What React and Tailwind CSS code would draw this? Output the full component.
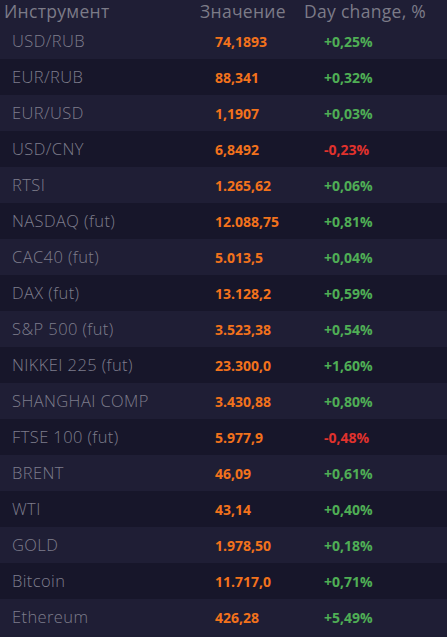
import React from "react";

const rows = [
  ["USD/RUB", "74,1893", "+0,25%"],
  ["EUR/RUB", "88,341", "+0,32%"],
  ["EUR/USD", "1,1907", "+0,03%"],
  ["USD/CNY", "6,8492", "-0,23%"],
  ["RTSI", "1.265,62", "+0,06%"],
  ["NASDAQ (fut)", "12.088,75", "+0,81%"],
  ["CAC40 (fut)", "5.013,5", "+0,04%"],
  ["DAX (fut)", "13.128,2", "+0,59%"],
  ["S&P 500 (fut)", "3.523,38", "+0,54%"],
  ["NIKKEI 225 (fut)", "23.300,0", "+1,60%"],
  ["SHANGHAI COMP", "3.430,88", "+0,80%"],
  ["FTSE 100 (fut)", "5.977,9", "-0,48%"],
  ["BRENT", "46,09", "+0,61%"],
  ["WTI", "43,14", "+0,40%"],
  ["GOLD", "1.978,50", "+0,18%"],
  ["Bitcoin", "11.717,0", "+0,71%"],
  ["Ethereum", "426,28", "+5,49%"],
];

export default function App() {
  return (
    <div className="w-[447px] h-[637px] bg-[#1e1d33] font-['Open_Sans',sans-serif] overflow-hidden">
      {/* header */}
      <div className="h-[23px] flex items-center text-[17.5px] tracking-[0.3px] text-[#7c7b88] bg-[#1f1e35]">
        <div className="w-[196px] pl-[4px]">Инструмент</div>
        <div className="w-[104px] pl-[4px]">Значение</div>
        <div className="pl-[4px]">Day change, %</div>
      </div>
      {rows.map((r, i) => (
        <div
          key={i}
          className={`h-[36px] flex items-center ${
            i % 2 === 0 ? "bg-[#1f1e35]" : "bg-[#17162a]"
          }`}
        >
          <div className="w-[215px] pl-[12px] text-[16.5px] tracking-[0.4px] font-light text-[#7e7d8c]">
            {r[0]}
          </div>
          <div className="w-[109px] text-[14px] font-bold text-[#f2721c]">
            {r[1]}
          </div>
          <div
            className={`text-[14px] font-bold ${
              r[2].startsWith("-") ? "text-[#e0322d]" : "text-[#4fae55]"
            }`}
          >
            {r[2]}
          </div>
        </div>
      ))}
    </div>
  );
}
